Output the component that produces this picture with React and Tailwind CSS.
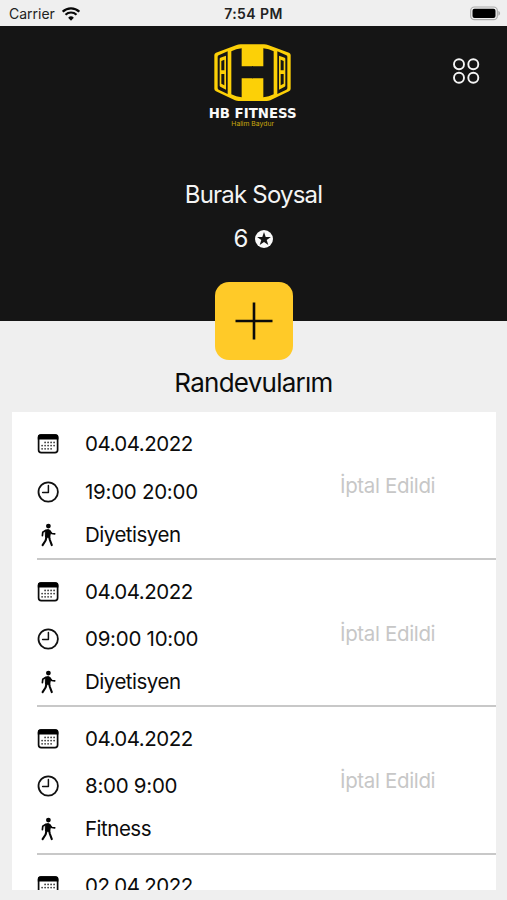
import React from 'react';

const appointments = [
  { date: '04.04.2022', time: '19:00 20:00', type: 'Diyetisyen' },
  { date: '04.04.2022', time: '09:00 10:00', type: 'Diyetisyen' },
  { date: '04.04.2022', time: '8:00 9:00', type: 'Fitness' },
];

function WifiIcon() {
  return (
    <svg className="h-[14px] w-[18px]" viewBox="0 0 54 42" fill="none" stroke="#080808">
      <path d="M2 14a36 36 0 0 1 50 0" strokeWidth="7" />
      <path d="M10.5 23a24 24 0 0 1 33 0" strokeWidth="6.5" />
      <path d="M27 41l-8.5-9a12.5 12.5 0 0 1 17 0z" fill="#080808" stroke="none" />
    </svg>
  );
}

function BatteryIcon() {
  return (
    <svg className="h-[15px] w-[31px]" viewBox="0 0 93 45">
      <rect x="2" y="3" width="80" height="38" rx="11" fill="#efefef" stroke="#acacac" strokeWidth="3.5" />
      <rect x="7.5" y="8" width="69" height="28" rx="6" fill="#000" />
      <path d="M85 15c7 2 7 12 0 14z" fill="#acacac" />
    </svg>
  );
}

function LogoSide() {
  return (
    <g>
      <path d="M97 46q14-7 31-9v54h34v36h-34v57q-17-2-31-9z" fill="#151515" />
      <path d="M56 62q0-3 3-4l27-12v128l-27-13q-3-2-3-5z" fill="#151515" />
      <path d="M62 68q0-2 2-3l17-6v102l-17-9q-2-1-2-3z" fill="#fcd007" />
      <path d="M67 75l9-4v32h-9zM67 114h9v34l-9-5z" fill="#151515" />
    </g>
  );
}

function Logo() {
  return (
    <div className="ml-px flex h-[100px] w-[110px] flex-col items-center">
      <svg className="h-[66px] w-[110px] shrink-0" viewBox="0 0 330 198">
        <path
          d="M125 25h70q7 0 12 2l63 23q5 2 5 7v101q0 5-5 8l-56 27q-5 2-11 2h-84q-6 0-11-2l-57-27q-5-3-5-8V57q0-5 5-7l62-23q5-2 12-2z"
          fill="#fcd007"
        />
        <LogoSide />
        <g transform="matrix(-1 0 0 1 321 0)">
          <LogoSide />
        </g>
      </svg>
      <svg className="mt-[2px] h-[15px] w-[110px] shrink-0 overflow-visible" viewBox="0 0 330 45">
        <text x="29" y="41" textLength="264" lengthAdjust="spacingAndGlyphs" fill="#fafafa" className="font-['DejaVu_Sans',sans-serif] text-[42px] font-bold">HB FITNESS</text>
      </svg>
      <svg className="h-[10px] w-[110px] shrink-0" viewBox="0 0 330 30">
        <text x="97" y="20" textLength="128" lengthAdjust="spacingAndGlyphs" fill="#c9a80c" className="font-['Inter',sans-serif] text-[20px]">Halim Baydur</text>
      </svg>
    </div>
  );
}

function MenuIcon() {
  return (
    <svg className="h-[28px] w-[28px]" viewBox="0 0 28 28" fill="none" stroke="#f5f5f5" strokeWidth="1.9">
      <circle cx="7" cy="7.2" r="5" />
      <circle cx="21.3" cy="7.2" r="5" />
      <circle cx="7" cy="20.8" r="5" />
      <circle cx="21.3" cy="20.8" r="5" />
    </svg>
  );
}

function StarIcon() {
  return (
    <svg className="h-[18px] w-[18px]" viewBox="0 0 18 18">
      <circle cx="9" cy="9" r="9" fill="#fafafa" />
      <path d="M9 2l1.7 5h5.2l-4.2 3.1 1.6 5L9 12l-4.3 3.1 1.6-5L2.1 7h5.2z" fill="#151515" />
    </svg>
  );
}

function CalendarIcon() {
  const dots = [[9, 8.4], [12, 8.4], [15, 8.4], [18, 8.4], [6, 11.6], [9, 11.6], [12, 11.6], [15, 11.6], [18, 11.6], [6, 14.8], [9, 14.8], [12, 14.8], [15, 14.8]];
  return (
    <svg className="h-[20px] w-[22px]" viewBox="0 0 22 20">
      <rect x="1.6" y="1" width="19" height="17.6" rx="2.6" fill="#fff" stroke="#0b0b0b" strokeWidth="1.7" />
      <path d="M.8 5.6V3Q.8.2 3.6.2h15q2.8 0 2.8 2.8v2.6z" fill="#000" />
      {dots.map(([x, y]) => (
        <circle key={`${x}-${y}`} cx={x - 0.9} cy={y} r=".85" fill="#333" />
      ))}
    </svg>
  );
}

function ClockIcon() {
  return (
    <svg className="h-[22px] w-[22px]" viewBox="0 0 22 22" fill="none" stroke="#111">
      <circle cx="11.2" cy="11" r="9.7" strokeWidth="1.8" />
      <path d="M11.4 4.4v7H5.6" strokeWidth="1.5" strokeLinecap="round" strokeLinejoin="round" />
    </svg>
  );
}

function WalkIcon() {
  return (
    <svg className="h-[24px] w-[22px]" viewBox="0 0 22 24" fill="none" stroke="#050505" strokeLinecap="round" strokeLinejoin="round">
      <circle cx="11.4" cy="3.1" r="2.4" fill="#050505" stroke="none" />
      <path d="M8.6 7.2q2.2-1.5 4.2 0l.8 1.9-.9 5-3.8.2z" fill="#050505" strokeWidth="1" />
      <path d="M8.6 7.4L5.8 9.2l-.4 3.5M13 8.2l1.8 2.3 2.9.4" strokeWidth="1.7" />
      <path d="M9.6 13.5l-1 4-3 4.6M12 13.2l.9 3.8 1.9 5.1" strokeWidth="2.1" />
    </svg>
  );
}

function Appointment({ date, time, type }) {
  return (
    <li className="ml-[25px] flex h-[147.4px] shrink-0 border-b-2 border-[#c8c8c8]">
      <div className="w-[268px] pt-[16px] text-[20.5px] leading-[32px] text-[#0c0c0c]">
        <div className="flex h-[32px] items-center">
          <CalendarIcon />
          <span className="ml-[26px] tracking-[-0.5px]">{date}</span>
        </div>
        <div className="mt-[15.3px] flex h-[32px] items-center">
          <ClockIcon />
          <span className="ml-[26px] tracking-[-0.27px]">{time}</span>
        </div>
        <div className="mt-[10.9px] flex h-[32px] items-center">
          <WalkIcon />
          <span className="ml-[26px] tracking-[-0.5px]">{type}</span>
        </div>
      </div>
      <div className="flex flex-1 items-center pl-[35px] pt-[3px] text-[20.5px] tracking-[-0.35px] text-[#c7c7c7]">İptal Edildi</div>
    </li>
  );
}

export default function App() {
  return (
    <div className="flex h-[900px] w-[507px] flex-col overflow-hidden bg-[#efefef] font-['Inter',sans-serif]">
      <div className="grid h-[26px] shrink-0 grid-cols-3 items-center text-[#222]">
        <div className="flex items-center gap-[5px] pl-[9px] pt-px text-[14px]">
          <span className="w-[48px]">Carrier</span>
          <WifiIcon />
        </div>
        <div className="pt-px text-center text-[14px] font-semibold tracking-[0.4px]">7:54 PM</div>
        <div className="flex justify-end pr-[6px]">
          <BatteryIcon />
        </div>
      </div>
      <header className="relative flex h-[295px] shrink-0 flex-col items-center bg-[#151515] pt-[10px] text-[#f4f4f4]">
        <Logo />
        <button className="absolute right-[27px] top-[31px]" aria-label="Menü">
          <MenuIcon />
        </button>
        <h1 className="mt-[42px] text-[24px] leading-[34px] tracking-[-0.8px]">Burak Soysal</h1>
        <div className="mt-[11px] flex h-[32px] items-center gap-[7px] text-[24px]">
          <span>6</span>
          <StarIcon />
        </div>
        <button className="absolute bottom-[-39px] left-[215px] flex h-[78px] w-[78px] items-center justify-center rounded-[14px] bg-[#ffca28]" aria-label="Ekle">
          <svg className="h-[38px] w-[38px]" viewBox="0 0 38 38" stroke="#0b0b0b" strokeWidth="2.6">
            <path d="M19 .5v37M.5 19h37" />
          </svg>
        </button>
      </header>
      <h2 className="mt-[45px] h-[34px] shrink-0 text-center text-[26px] leading-[34px] tracking-[-0.75px] text-[#0c0c0c]">Randevularım</h2>
      <ul className="ml-[12px] mt-[12px] flex h-[478px] w-[484px] shrink-0 flex-col overflow-hidden bg-white pt-[0.4px]">
        {appointments.map((item, i) => (
          <Appointment key={i} {...item} />
        ))}
        <li className="ml-[25px] flex shrink-0 pt-[15.5px] text-[20.5px] leading-[32px] text-[#0c0c0c]">
          <div className="flex h-[32px] items-center">
            <CalendarIcon />
            <span className="ml-[26px] tracking-[-0.5px]">02.04.2022</span>
          </div>
        </li>
      </ul>
    </div>
  );
}
